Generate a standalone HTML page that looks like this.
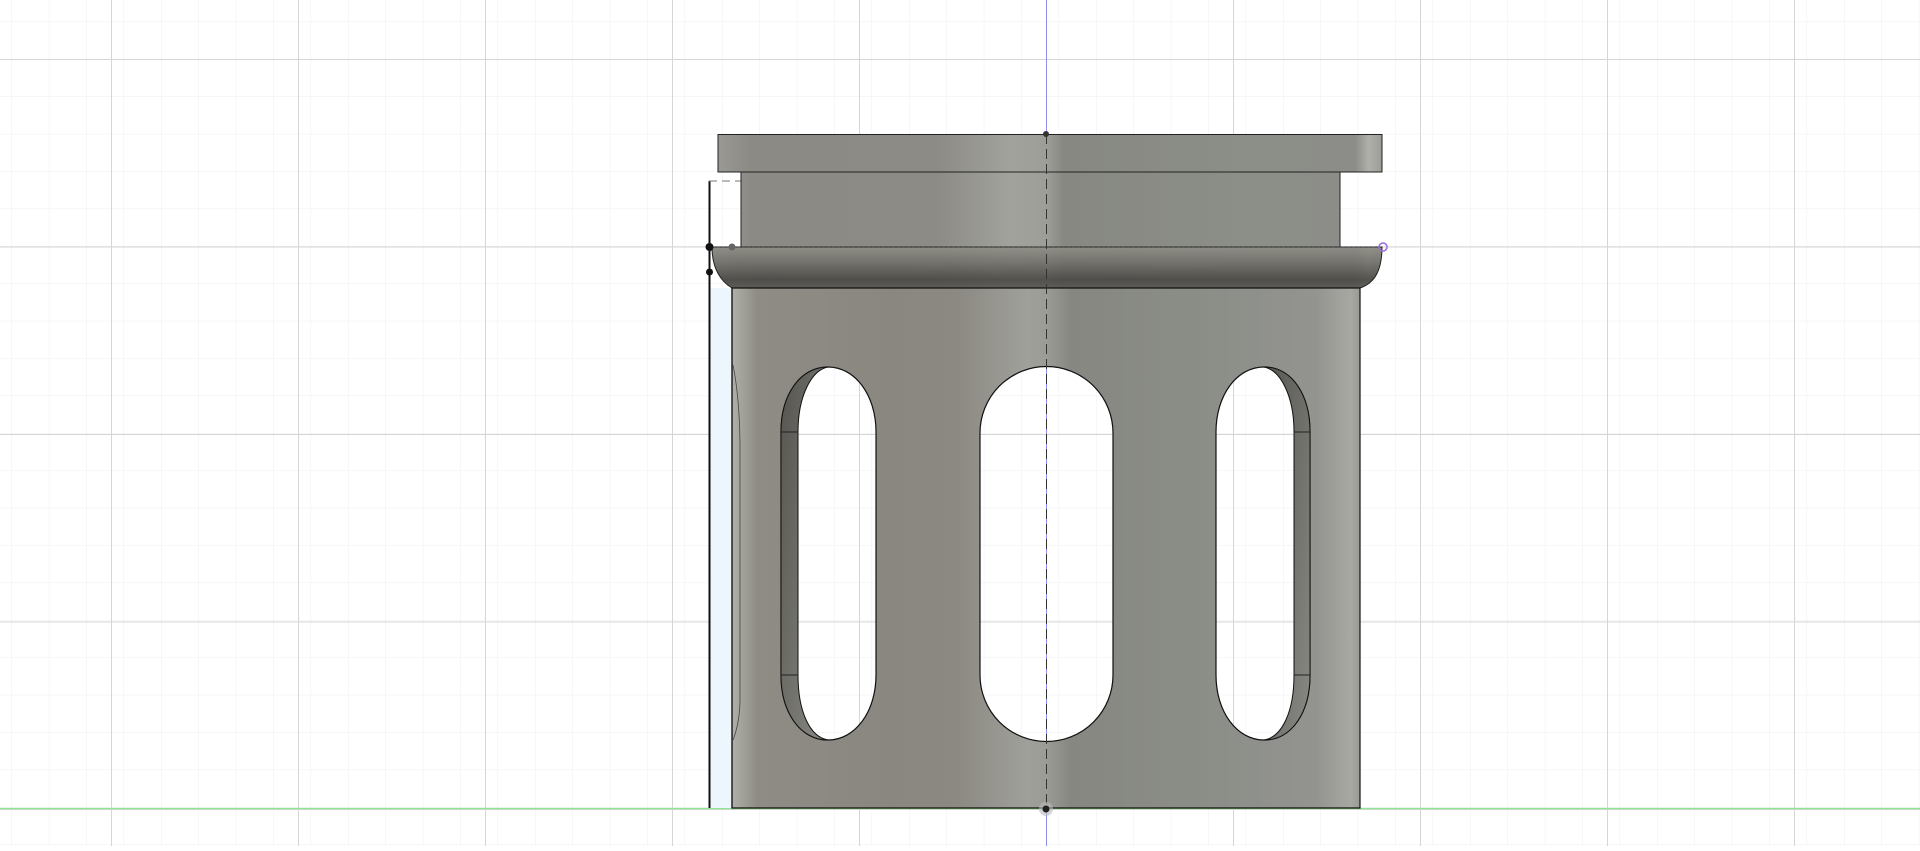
<!DOCTYPE html>
<html><head><style>html,body{margin:0;padding:0;background:#fff;overflow:hidden}</style></head>
<body>
<svg width="1920" height="846" viewBox="0 0 1920 846" xmlns="http://www.w3.org/2000/svg">
<defs>
<pattern id="minor" x="11.4" y="21.6" width="37.4" height="37.4" patternUnits="userSpaceOnUse">
<path d="M0 0V37.4M0 0H37.4" stroke="#efefef" stroke-width="1" fill="none"/></pattern>
<pattern id="major" x="111" y="59" width="187" height="187.5" patternUnits="userSpaceOnUse">
<path d="M0.5 0V187.5M0 0.5H187" stroke="#d6d6d6" stroke-width="1" fill="none"/></pattern>
<linearGradient id="body" x1="732" x2="1360" gradientUnits="userSpaceOnUse">
<stop offset="0" stop-color="#b0b0a9"/><stop offset="0.04" stop-color="#8e8c85"/>
<stop offset="0.25" stop-color="#8a8780"/><stop offset="0.36" stop-color="#8b8982"/>
<stop offset="0.47" stop-color="#a0a09a"/><stop offset="0.5" stop-color="#9c9c96"/>
<stop offset="0.54" stop-color="#868781"/><stop offset="0.75" stop-color="#8b8d87"/>
<stop offset="0.93" stop-color="#939490"/><stop offset="0.985" stop-color="#a8a8a2"/><stop offset="1" stop-color="#9a9a94"/>
</linearGradient>
<linearGradient id="plate" x1="718" x2="1382" gradientUnits="userSpaceOnUse">
<stop offset="0" stop-color="#9a9993"/><stop offset="0.05" stop-color="#8b8a84"/>
<stop offset="0.33" stop-color="#8c8b85"/><stop offset="0.44" stop-color="#a2a29c"/>
<stop offset="0.495" stop-color="#9e9e98"/><stop offset="0.52" stop-color="#878882"/>
<stop offset="0.8" stop-color="#8c8e88"/><stop offset="0.96" stop-color="#8c8d88"/>
<stop offset="0.98" stop-color="#b0b0aa"/><stop offset="1" stop-color="#9c9c96"/>
</linearGradient>
<linearGradient id="lipv" x1="0" y1="247" x2="0" y2="288" gradientUnits="userSpaceOnUse">
<stop offset="0" stop-color="#8e8d86"/><stop offset="0.35" stop-color="#72706a"/><stop offset="0.8" stop-color="#45433f"/><stop offset="1" stop-color="#55534f"/>
</linearGradient>
<linearGradient id="wall" x1="0" x2="1" y1="0" y2="1">
<stop offset="0" stop-color="#55544f"/><stop offset="1" stop-color="#8a8a84"/></linearGradient>
</defs>
<rect width="1920" height="846" fill="url(#minor)"/>
<rect width="1920" height="846" fill="url(#major)"/>
<line x1="0" y1="808.5" x2="1920" y2="808.5" stroke="#8fe58f" stroke-width="1.2"/>
<line x1="1046.5" y1="0" x2="1046.5" y2="846" stroke="#8f8fef" stroke-width="1"/>

<rect x="709" y="288" width="23" height="520" fill="#eef6fd"/>
<path d="M709.5 181 V808" stroke="#111" stroke-width="2" fill="none"/>
<path d="M709 181 H1046" stroke="#777" stroke-width="1" stroke-dasharray="8 5" fill="none"/>

<rect x="718" y="134.5" width="664" height="37.5" fill="url(#plate)" stroke="#222" stroke-width="1"/>
<rect x="741" y="172" width="599" height="75" fill="url(#plate)" stroke="#222" stroke-width="1"/>
<path d="M712 247 H1382 C1382 270 1375 283 1360 288 H732 C722 282 712 270 712 247 Z" fill="url(#plate)"/>
<path d="M712 247 H1382 C1382 270 1375 283 1360 288 H732 C722 282 712 270 712 247 Z" fill="url(#lipv)" opacity="0.85"/>
<path d="M712 247 H1382 C1382 270 1375 283 1360 288 H732 C722 282 712 270 712 247 Z" fill="none" stroke="#222" stroke-width="1"/>
<line x1="712" y1="247" x2="1382" y2="247" stroke="#333" stroke-dasharray="3 2"/>

<path fill-rule="evenodd" fill="url(#body)" stroke="#111" stroke-width="1.2" d="
M732 288 H1360 V808 H732 Z
M980 433 A66.5 66.5 0 0 1 1113 433 V675 A66.5 66.5 0 0 1 980 675 Z
M781 432 C781 395 800 367 828 367 C855 367 876 395 876 432 V675 C876 712 855 740 828 740 C800 740 781 712 781 675 Z
M1216 432 C1216 395 1237 367 1264 367 C1292 367 1310 395 1310 432 V675 C1310 712 1292 740 1264 740 C1237 740 1216 712 1216 675 Z"/>
<path fill="url(#wall)" stroke="#111" stroke-width="1" d="M781 432 C781 395 800 367 828 367 C812 370 798 395 798 432 V675 C798 712 810 737 828 740 C800 740 781 712 781 675 Z"/>
<path fill="url(#wall)" stroke="#111" stroke-width="1" d="M1310 432 C1310 395 1292 367 1264 367 C1280 370 1294 395 1294 432 V675 C1294 712 1282 737 1264 740 C1292 740 1310 712 1310 675 Z"/>
<line x1="781" y1="432" x2="798" y2="432" stroke="#222"/><line x1="781" y1="675" x2="798" y2="675" stroke="#222"/>
<line x1="1294" y1="432" x2="1310" y2="432" stroke="#222"/><line x1="1294" y1="675" x2="1310" y2="675" stroke="#222"/>
<path d="M733 365 C738 390 740 420 740 450 V700 C740 715 737 730 733 740" stroke="#444" stroke-width="0.8" fill="none"/>
<line x1="732" y1="288" x2="732" y2="808" stroke="#111" stroke-width="1.2"/>

<line x1="1046.5" y1="134" x2="1046.5" y2="808" stroke="#333" stroke-width="1" stroke-dasharray="10 5"/>
<circle cx="1046" cy="134" r="3" fill="#333"/>
<circle cx="1046" cy="809" r="7" fill="#bbb" opacity="0.6"/>
<circle cx="1046" cy="809" r="3.5" fill="#222"/>
<circle cx="709.5" cy="247" r="4" fill="#111"/>
<circle cx="709.5" cy="272" r="3.5" fill="#111"/>
<circle cx="732" cy="247" r="3.5" fill="#666"/>
<circle cx="1383" cy="247" r="4" fill="none" stroke="#9a6ae0" stroke-width="1.5"/>
</svg>
</body></html>
